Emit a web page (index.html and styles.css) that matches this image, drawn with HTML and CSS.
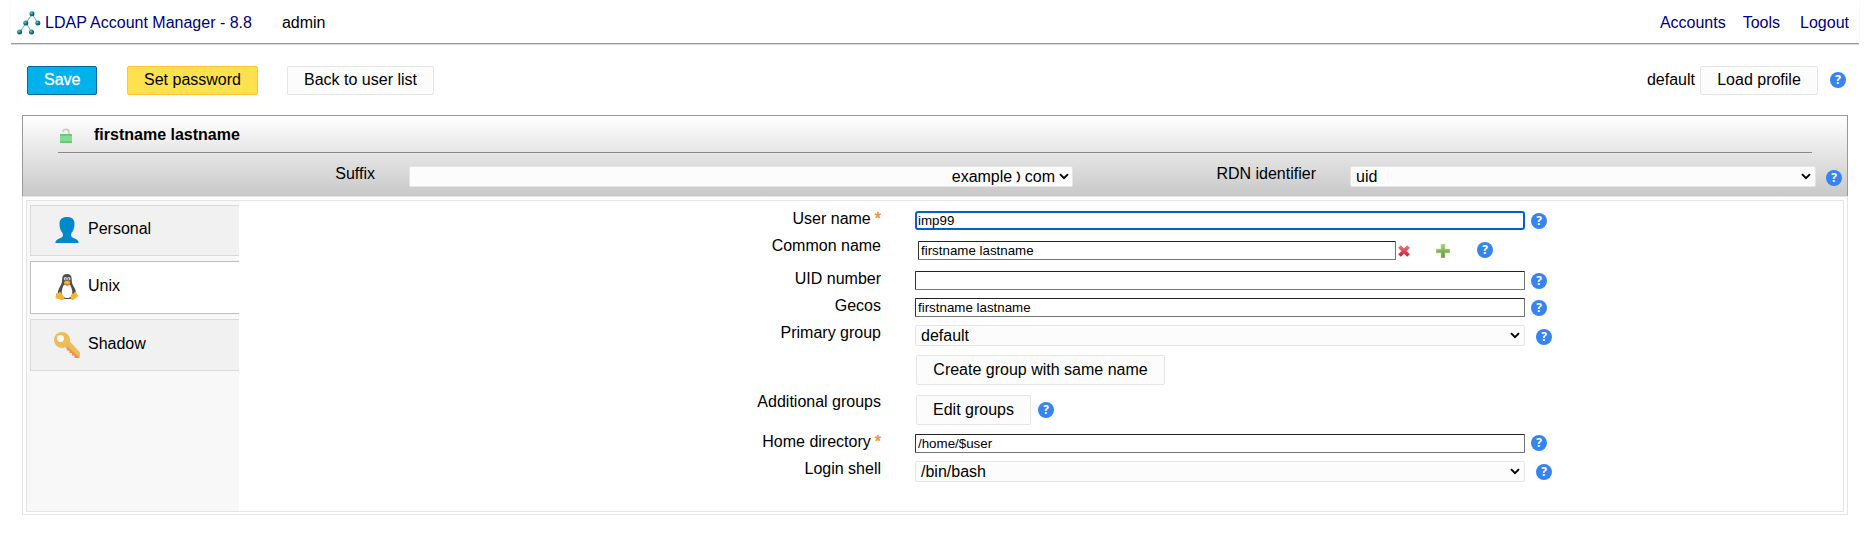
FILE: index.html
```
<!DOCTYPE html>
<html lang="en">
<head>
<meta charset="utf-8">
<title>LDAP Account Manager</title>
<link rel="stylesheet" href="styles.css">
</head>
<body>
<svg class="defs" width="0" height="0">
  <defs>
    <radialGradient id="ball" cx=".38" cy=".35" r=".65"><stop offset="0" stop-color="#5fd0d8"/><stop offset=".5" stop-color="#14828c"/><stop offset="1" stop-color="#0a4f5c"/></radialGradient>
    <linearGradient id="red" gradientUnits="userSpaceOnUse" x1="0" y1="0" x2="0" y2="12"><stop offset="0" stop-color="#f4777a"/><stop offset="1" stop-color="#cc1a34"/></linearGradient>
    <linearGradient id="green" x2="0" y2="1"><stop offset="0" stop-color="#a9d46f"/><stop offset="1" stop-color="#5b9632"/></linearGradient>
    <symbol id="chevron" viewBox="0 0 10 7"><path d="M1 1.2 5 5.2 9 1.2" fill="none" stroke="#000" stroke-width="1.9"/></symbol>
  </defs>
</svg>

<header class="topbar">
  <a class="brand">
    <svg class="logo" width="24" height="24" viewBox="0 0 24 24">
      <path d="M15 3 3 21M15 3l6 9M9 12l5.500 9" fill="none" stroke="#4fb3bd" stroke-width="1"/>
      <g fill="url(#ball)"><circle cx="15" cy="2.800" r="2.500"/><circle cx="8.800" cy="12" r="2.500"/><circle cx="20.800" cy="12" r="2.500"/><circle cx="2.600" cy="21" r="2.500"/><circle cx="14.500" cy="21" r="2.500"/></g>
    </svg>
    <span>LDAP Account Manager - 8.8</span>
  </a>
  <span class="login">admin</span>
  <nav class="links"><a>Accounts</a><a>Tools</a><a>Logout</a></nav>
</header>

<div class="actions">
  <button class="btn btn-save">Save</button>
  <button class="btn btn-password">Set password</button>
  <button class="btn">Back to user list</button>
  <div class="profile"><span>default</span><button class="btn">Load profile</button><span class="help">?</span></div>
</div>

<main class="account">
  <section class="account-head">
    <div class="account-title">
      <svg class="lock" width="12" height="16" viewBox="0 0 12 16"><path d="M3.200 4.200V3.400C3.200 1.900 4.400 1.300 6 1.300s2.900.8 2.900 2.400V7" fill="none" stroke="#ccc" stroke-width="1.700"/><path fill="#82dc92" d="M0 6h12v9H0z"/><path fill="#5fca72" d="M0 6h12v1.700H0zM0 13.300h12V15H0z"/></svg>
      <h1>firstname lastname</h1>
    </div>
    <div class="account-dn">
      <span class="dn-label dn-suffix">Suffix</span>
      <div class="select select-suffix"><span>example <span class="sep">)</span> com</span><svg class="chev"><use href="#chevron"/></svg></div>
      <span class="dn-label dn-rdn">RDN identifier</span>
      <div class="select select-rdn"><span>uid</span><svg class="chev"><use href="#chevron"/></svg></div>
      <span class="help">?</span>
    </div>
  </section>

  <section class="account-body">
    <div class="panel">
      <ul class="tabs">
        <li class="tab tab-personal">
          <svg width="26" height="26" viewBox="0 0 26 26"><path fill="#0088cc" d="M13 0c5 0 7.500 2.300 7.500 6.800 0 3.700-1.100 7.200-3 9.200-.7.900-.5 3.300.3 4 1.600 1.400 6.700 2 6.900 6H1.300c.2-4 5.300-4.600 6.900-6 .8-.7 1-3.100.3-4-1.900-2-3-5.500-3-9.200C5.500 2.300 8 0 13 0z"/></svg>
          <span>Personal</span>
        </li>
        <li class="tab tab-active">
          <svg width="26" height="26" viewBox="0 0 26 26">
            <path fill="#4d4d4d" d="M13 0c3 0 4.700 1.800 4.700 5 0 3.700.5 5 2 7.500 1.800 3 2.800 5 1.600 8.500L17 25H9L4 20c-.5-2.500.6-4.800 2-7.500 1.500-2.700 2.200-4 2.200-7.500C8.200 1.800 10 0 13 0z"/>
            <path fill="#fff" d="M10 10.500c2 1.300 4 1.300 6 0 1.200 2.500 2.500 5.500 2.300 8.500-.2 3.200-2 5-5 5s-5.600-1.500-5.600-5c0-3 1-6 2.300-8.500z"/>
            <circle cx="11.500" cy="4.800" r="1.700" fill="#ddd"/><circle cx="14.800" cy="4.800" r="1.700" fill="#ddd"/><circle cx="11.800" cy="5" r=".7" fill="#333"/><circle cx="14.500" cy="5" r=".7" fill="#333"/>
            <path fill="#f5b32e" d="m9.800 8 3.300-1.600L16.500 8l-.8 2-2.500 1.400L10.500 10z"/><path fill="#f27a24" d="M10.200 9.200c2 1 4 1 6 0l-.7 1.500-2.300 1-2.300-1z"/>
            <path fill="#f5b32e" d="m6 17.500 4.500 6.200c.2 1.500-.8 2.300-2.500 2.200l-6-1.700c-.8-.5-.4-1.400-.1-2.200l.1-2.700 2.700-.3zM21 17.500l1.200 1.600 2.300 3-2.700 2-2.800 1.900c-1.800.2-2.700-.8-2.300-2.400l.9-3.500 2-.6z"/>
          </svg>
          <span>Unix</span>
        </li>
        <li class="tab">
          <svg width="26" height="26" viewBox="0 0 26 26"><path fill="#ef8d4c" d="m12 13.500 2-2 11 12V26h-4.500v-2.500H18V21h-2.500v-2.500H13z"/><path fill="#edbd57" d="m11 12.500 4-4L26 20.500V26z"/><circle cx="8" cy="8" r="8" fill="#edbd57"/><circle cx="6.500" cy="6.500" r="3.400" fill="#fff"/></svg>
          <span>Shadow</span>
        </li>
      </ul>

      <div class="form">
        <div class="row"><label>User name<b class="req">*</b></label><div class="field"><input class="text text-focus" value="imp99"><span class="help">?</span></div></div>
        <div class="row row-multi"><label>Common name</label><div class="field"><input class="text text-short" value="firstname lastname">
          <svg class="del" width="12" height="12" viewBox="0 0 12 12"><path d="M1.500 1.500l9 9M10.500 1.500l-9 9" stroke="url(#red)" stroke-width="3.800"/></svg>
          <svg class="add" width="14" height="14" viewBox="0 0 14 14"><path fill="url(#green)" stroke="#8fc060" stroke-width=".5" d="M5.200.3h3.600v4.900h4.900v3.600H8.800v4.900H5.200V8.800H.3V5.200h4.900z"/></svg>
          <span class="help">?</span></div></div>
        <div class="row"><label>UID number</label><div class="field"><input class="text" value=""><span class="help">?</span></div></div>
        <div class="row"><label>Gecos</label><div class="field"><input class="text" value="firstname lastname"><span class="help">?</span></div></div>
        <div class="row row-select"><label>Primary group</label><div class="field"><div class="select"><span>default</span><svg class="chev"><use href="#chevron"/></svg></div><span class="help">?</span></div></div>
        <div class="row row-create"><label></label><div class="field"><button class="btn">Create group with same name</button></div></div>
        <div class="row row-groups"><label>Additional groups</label><div class="field"><button class="btn">Edit groups</button><span class="help">?</span></div></div>
        <div class="row row-home"><label>Home directory<b class="req">*</b></label><div class="field"><input class="text" value="/home/$user"><span class="help">?</span></div></div>
        <div class="row row-select row-shell"><label>Login shell</label><div class="field"><div class="select"><span>/bin/bash</span><svg class="chev"><use href="#chevron"/></svg></div><span class="help">?</span></div></div>
      </div>
    </div>
  </section>
</main>
</body>
</html>
```
FILE: styles.css
```
* { box-sizing: border-box; }
body { margin: 0; background: #fff; color: #000; font: 16px/18px "Liberation Sans", Arial, sans-serif; height: 534px; overflow: hidden; }
svg { display: block; flex: none; }
.defs { position: absolute; }

.topbar { display: flex; height: 44px; margin: 0 14px 0 11px; padding: 11px 10px 0 6px; border-bottom: 1px solid #999; box-shadow: 0 1px 1px #ddd; }
.brand { display: flex; gap: 4px; color: #000080; }
.brand span, .login, .links { padding-top: 3px; }
.login { margin-left: 30px; }
.links { display: flex; margin-left: auto; color: #000080; }
.links a + a { margin-left: 17px; }
.links a:last-child { margin-left: 20px; }

.actions { display: flex; height: 71px; padding: 22px 27px 0; }
.btn { height: 29px; padding: 0 16px 2px; border: 1px solid #e5e5e5; border-radius: 2px; background: #fcfcfc; color: #000; font: inherit; white-space: nowrap; }
.btn-save { width: 70px; background: #00b2eb; border-color: #00689d; color: #fff; -webkit-text-stroke: .3px #fff; }
.btn-password { width: 131px; margin: 0 29px 0 30px; background: #ffe14f; border-color: #ffc533; }
.actions > .btn:nth-child(3) { width: 147px; }
.actions .btn { padding-bottom: 1px; }
.profile { display: flex; margin-left: auto; }
.profile > span:first-child { padding: 5px 5px 0 0; }
.profile .btn { width: 118px; }
.profile .help { margin: 6px 0 0 12px; }
.help { flex: none; width: 16px; height: 16px; border-radius: 50%; background: #3584ef; color: #fff; font: bold 12px/16px "Open Sans", sans-serif; text-align: center; }

.account { margin: 0 25px 0 22px; }
.account-head { height: 81px; border: 1px solid #999; border-bottom: 0; background: linear-gradient(#fff, #c8c8c8); }
.account-title { display: flex; height: 37px; margin: 0 35px; border-bottom: 1px solid #888; box-shadow: 0 1px 0 #e8e8e8; }
.lock { margin: 12px 22px 0 2px; }
h1 { margin: 0; padding-top: 10px; font-size: 16px; line-height: 18px; }
.account-dn { display: flex; padding: 13px 5px 0 0; }
.dn-label { margin-top: -1px; text-align: right; }
.dn-suffix { width: 352px; margin-right: 34px; }
.dn-rdn { width: 243px; margin-right: 34px; }
.account-dn .help { margin: 4px 0 0 10px; }
.select { display: flex; justify-content: space-between; align-items: center; width: 610px; height: 21px; padding: 0 4px 0 5px; border: 1px solid #e5e5e5; border-radius: 2px; background: #fcfcfc; }
.select-suffix { width: 664px; justify-content: flex-end; gap: 4px; padding-right: 3px; }
.select-rdn { width: 466px; }
.sep { font-size: 11px; vertical-align: 2px; line-height: 1; -webkit-text-stroke: .5px #000; }
.chev { width: 10px; height: 7px; }

.account-body { height: 319px; padding: 3px; border: 1px solid #e5e5e5; }
.panel { display: flex; height: 312px; border: 1px solid #e5e5e5; }
.tabs { width: 212px; margin: 0; padding: 4px 0 0 3px; background: #f8f8f8; list-style: none; }
.tab { display: flex; gap: 8px; height: 52px; padding: 12px 0 0 23px; margin-bottom: 5px; border: 1px solid #d9d9d9; border-right: 0; background: #f1f1f1; }
.tab span { padding-top: 3px; }
.tab-personal { height: 51px; padding-top: 11px; }
.tab-active { height: 53px; border-color: #bfbfbf; background: #fff; }

.form { flex: 1; padding-top: 6px; }
.row { display: flex; height: 27px; }
.row label { width: 643px; padding: 3px 1px 0 0; text-align: right; }
.req { margin-left: 4px; color: #ff8c3a; font-weight: normal; -webkit-text-stroke: .5px #ff8c3a; }
.field { display: flex; padding: 4px 0 0 33px; }
.text { width: 610px; height: 19px; margin: 0; padding: 0 2px; border: 1px solid #767676; border-top-color: #222; border-left-color: #333; border-radius: 1px; background: #fff; color: #000; font: 13.333px/15px "Liberation Sans", Arial, sans-serif; outline: 0; }
.text-focus { border: 2px solid #0062cf; border-radius: 3px; padding: 0 1px; }
.field .help { margin: 2px 0 0 6px; }
.row-multi { height: 33px; }
.row-multi .field { padding: 7px 0 0 36px; }
.text-short { width: 478px; }
.del { margin: 4px 0 0 2px; }
.add { margin: 3px 0 0 26px; }
.row-multi .help { margin: 1px 0 0 27px; }
.row-select { height: 30px; }
.row-select .help { margin: 4px 0 0 11px; }
.row-create { height: 39px; }
.row-groups { height: 40px; }
.field .btn { height: 30px; margin-left: 1px; padding-bottom: 1px; }
.row-create .btn { width: 249px; }
.row-groups .field { padding-top: 5px; }
.row-groups .btn { width: 115px; }
.row-groups .help { margin: 7px 0 0 7px; }
.row-home .help { margin-top: 1px; }
.row-shell .help { margin-top: 3px; }
```
